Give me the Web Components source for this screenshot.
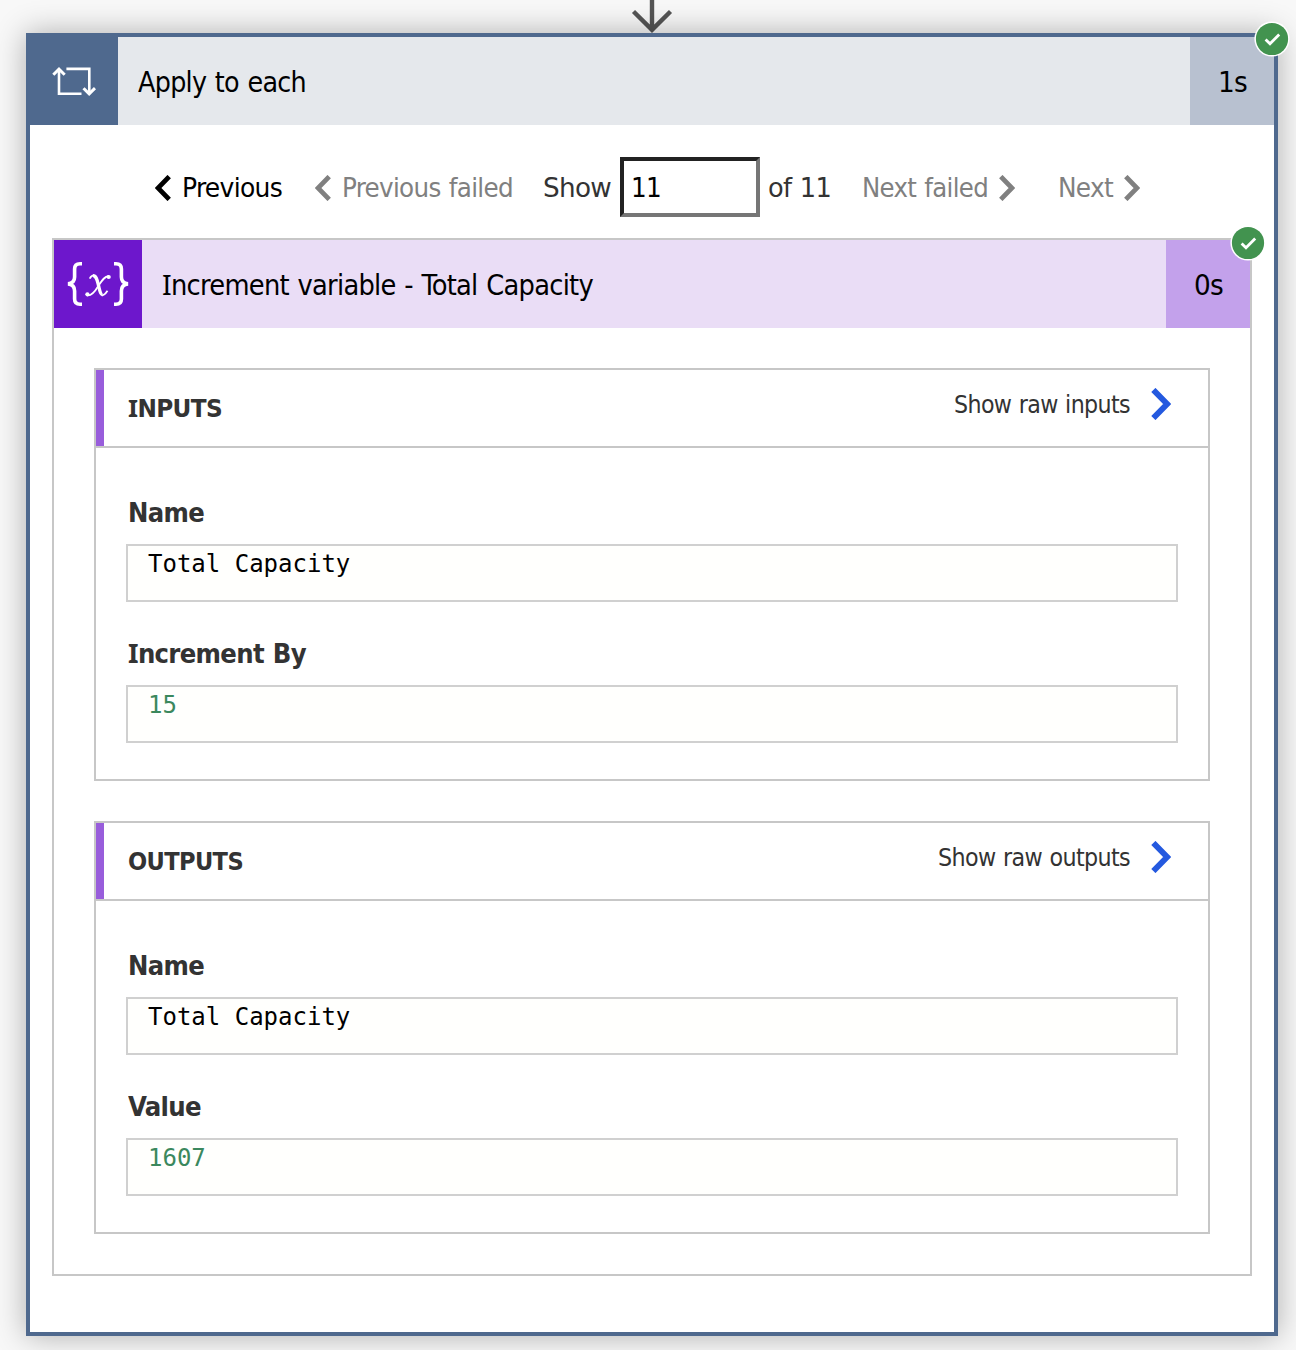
<!DOCTYPE html>
<html lang="en">
<head>
<meta charset="utf-8">
<title>Flow run</title>
<style>
html,body{margin:0;height:1350px;overflow:hidden;background:#f8f8f8;font-family:"DejaVu Sans Condensed","DejaVu Sans",sans-serif;font-stretch:condensed;color:#333}
</style>
</head>
<body>
<flow-page></flow-page>
<script>
const define = (name, html, setup) => {
  const t = document.createElement('template');
  t.innerHTML = '<style>:host{display:block;box-sizing:border-box}*{box-sizing:border-box}svg{display:block}</style>' + html;
  customElements.define(name, class extends HTMLElement {
    connectedCallback() {
      if (this.shadowRoot) return;
      this.attachShadow({mode: 'open'}).append(t.content.cloneNode(true));
      if (setup) setup.call(this, this.shadowRoot);
    }
  });
};

// A line of text, tightly tracked, whose glyphs are widened to fill the given width.
define('fit-text', `<style>:host{display:inline-block;white-space:pre;flex:none}span{display:inline-block;letter-spacing:-.025em;word-spacing:.04em;transform-origin:0 0}i{font-family:"Noto Sans",sans-serif;font-style:normal;font-stretch:normal;line-height:0}</style><span></span>`, function (root) {
  const s = root.querySelector('span');
  const text = this.getAttribute('text');
  s.innerHTML = text.replace(/I/g, '<i>I</i>');
  const w = +this.getAttribute('w');
  s.style.transform = 'scaleX(' + w / s.getBoundingClientRect().width + ')';
  this.style.width = w + 'px';
});

define('chevron-icon', `<style>:host{flex:none;width:16px;height:26px;margin-top:1px}:host([big]){width:20px;height:32px}:host([left]){transform:scaleX(-1)}svg{width:100%;height:100%}</style>
<svg viewBox="0 0 16 26"><path d="M1.8 1.6 13 13 1.8 24.4" fill="none" stroke="currentColor" stroke-width="4.8"/></svg>`);

define('loop-icon', `<style>:host{width:44px;height:29px}</style>
<svg width="44" height="29" viewBox="0 0 44 29" fill="none" stroke="#fff" stroke-width="2.6"><path d="M7 2V26.7H29.5M14.4 1.9H37.3V26.5"/><path stroke-width="3" d="M1.3 7.8 7 2.2 12.7 7.8M31.5 21.2l5.7 5.6 5.8-5.6"/></svg>`);

define('variable-icon', `<style>:host{width:62px;height:44px}</style>
<svg width="62" height="44" viewBox="0 0 62 44" fill="none" stroke="#fff"><g stroke-width="3.6"><path d="M15 1.8H13Q7.6 1.8 7.6 7V15Q7.6 21.2 1 21.9Q7.6 22.6 7.6 29V37Q7.6 42.2 13 42.2H15"/><path d="M47 1.8H49Q54.4 1.8 54.4 7V15Q54.4 21.2 61 21.9Q54.4 22.6 54.4 29V37Q54.4 42.2 49 42.2H47"/></g><g transform="translate(-.5 1)"><path stroke-width="3.3" d="M26.5 12.7C30 12.7 30.6 17 32 22.5C33.4 28 34 31.6 36 31.8"/><path stroke-width="1.8" d="M23.2 15.6Q25 12.3 27.2 12.4M35.5 32.3C38 32.6 39.5 30 41 27.8M42.5 13.3C38 12.5 34.5 19 31.5 23.5C28.5 28.5 25 33.3 20.5 32.3"/><g fill="#fff" stroke="none"><circle cx="42.2" cy="14" r="2.1"/><circle cx="20.9" cy="31.3" r="2.1"/></g></g></svg>`);

define('status-badge', `<style>:host{width:36px;height:36px}</style>
<svg width="36" height="36" viewBox="0 0 36 36"><circle cx="18" cy="18" r="17.6" fill="#fff"/><circle cx="18" cy="18" r="16.1" fill="#42934f"/><path d="M11.6 18.4 16 22.8 25.2 13.6" fill="none" stroke="#fff" stroke-width="2.8"/></svg>`);

define('action-header', `<style>
:host{display:flex;height:88px;color:#000;font-size:28px;line-height:88px;background:var(--tint)}
.icon{width:88px;display:flex;align-items:center;justify-content:center;background:var(--main)}
.title{flex:1;padding-left:20px;padding-top:2px}
.time{width:84px;background:var(--time);padding:2px 0 0 28px}
</style><div class="icon"><slot name="icon"></slot></div><div class="title"><slot></slot></div><div class="time"><slot name="time"></slot></div>`);

define('run-pager', `<style>
:host{display:flex;align-items:center;height:60px;font-size:26px;line-height:60px;color:#333}
.g{display:flex;align-items:center;gap:11px}
.off{color:#808080}.on{color:#000}
chevron-icon{margin-top:1px}
fit-text{padding-top:2px}
.box fit-text{padding-top:0}
.box{width:140px;height:60px;border:4px solid;border-color:#222 #767676 #767676 #222;background:#fff;color:#000;line-height:54px;padding-left:7px}
</style>
<div class="g on"><chevron-icon left></chevron-icon><fit-text text="Previous" w="100"></fit-text></div>
<div class="g off" style="margin-left:33px"><chevron-icon left></chevron-icon><fit-text text="Previous failed" w="171"></fit-text></div>
<fit-text text="Show" w="68" style="margin-left:30px"></fit-text>
<div class="box" style="margin-left:9px"><fit-text text="11" w="30"></fit-text></div>
<fit-text text="of 11" w="63" style="margin-left:8px"></fit-text>
<div class="g off" style="margin-left:31px"><fit-text text="Next failed" w="126"></fit-text><chevron-icon></chevron-icon></div>
<div class="g off" style="margin-left:43px"><fit-text text="Next" w="55"></fit-text><chevron-icon></chevron-icon></div>`);

define('value-field', `<style>
.l{font-size:26px;font-weight:700;line-height:36px;height:36px;padding-left:2px}
.b{height:58px;margin-top:13px;border:2px solid #d0d0d0;background:#fffffd;padding-left:20px;font:24px/36px "DejaVu Sans Mono",monospace;color:var(--ink,#000);white-space:pre}
:host([num]){--ink:#3b885d}
</style><div class="l"><slot name="label"></slot></div><div class="b"><slot></slot></div>`);

define('io-panel', `<style>
:host{height:413px;border:2px solid #c7c7c7}
header{height:78px;border-bottom:2px solid #c7c7c7;display:flex;line-height:76px;font-size:24px}
.bar{width:8px;background:#985ddb}
.t{font-weight:700;flex:1;padding:1px 0 0 24px}
.r{display:flex;align-items:center;height:70px;line-height:70px;gap:21px;padding-right:37px}
chevron-icon{color:#2459df;margin-top:-2px}
.body{display:flex;flex-direction:column;gap:34px;padding:47px 30px 0}
</style><header><div class="bar"></div><div class="t"><slot name="title"></slot></div><div class="r"><slot name="link"></slot><chevron-icon big></chevron-icon></div></header><div class="body"><slot></slot></div>`);

define('action-card', `<style>
:host{position:relative;border:var(--bw) solid var(--edge);background:#fff}
.badge{position:absolute;right:-16px;top:-15px}
:host([outer]) .badge{right:-16px;top:-16px}
</style><slot></slot><status-badge class="badge"></status-badge>`);

define('flow-page', `<style>
:host{height:1350px;overflow:hidden;padding-left:26px}
.arrow{height:33px;width:1252px;display:flex;justify-content:center}
.outer{--bw:4px;--edge:#4f698e;width:1252px;height:1303px;box-shadow:0 0 29px rgba(0,0,0,.3)}
.blue{--main:#4f698e;--tint:#e5e8ec;--time:#b8c1d0}
.violet{--main:#6d17cc;--tint:#eaddf6;--time:#c3a1eb}
run-pager{margin:32px 0 21px 125px}
.inner{--bw:2px;--edge:#c7c7c7;width:1200px;height:1038px;margin-left:22px}
.panels{display:flex;flex-direction:column;gap:40px;padding:40px}
</style>
<div class="arrow"><svg width="42" height="33" viewBox="0 0 42 33"><path d="M21 0V29M2.5 11.5 21 29.8 39.5 11.5" fill="none" stroke="#555" stroke-width="4.4"/></svg></div>
<action-card class="outer" outer>
 <action-header class="blue"><loop-icon slot="icon"></loop-icon><fit-text text="Apply to each" w="168"></fit-text><fit-text slot="time" text="1s" w="29"></fit-text></action-header>
 <run-pager></run-pager>
 <action-card class="inner">
  <action-header class="violet"><variable-icon slot="icon"></variable-icon><fit-text text="Increment variable - Total Capacity" w="431"></fit-text><fit-text slot="time" text="0s" w="29"></fit-text></action-header>
  <div class="panels">
   <io-panel><fit-text slot="title" text="INPUTS" w="94"></fit-text><fit-text slot="link" text="Show raw inputs" w="176"></fit-text>
    <value-field><fit-text slot="label" text="Name" w="76"></fit-text>Total Capacity</value-field>
    <value-field num><fit-text slot="label" text="Increment By" w="178"></fit-text>15</value-field></io-panel>
   <io-panel><fit-text slot="title" text="OUTPUTS" w="115"></fit-text><fit-text slot="link" text="Show raw outputs" w="192"></fit-text>
    <value-field><fit-text slot="label" text="Name" w="76"></fit-text>Total Capacity</value-field>
    <value-field num><fit-text slot="label" text="Value" w="73"></fit-text>1607</value-field></io-panel>
  </div>
 </action-card>
</action-card>`);
</script>
</body>
</html>
